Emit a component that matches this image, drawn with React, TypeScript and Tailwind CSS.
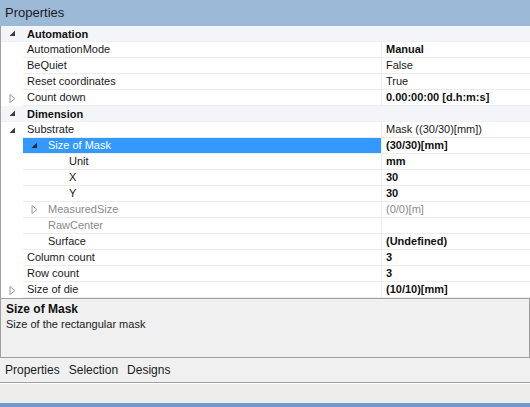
import React from 'react'

type Row = {
  name: string
  value?: string
  level: number
  category?: boolean
  expander?: 'open' | 'closed'
  boldValue?: boolean
  muted?: boolean
  selected?: boolean
}

const rows: Row[] = [
  { name: 'Automation', level: 0, category: true, expander: 'open' },
  { name: 'AutomationMode', value: 'Manual', level: 0, boldValue: true },
  { name: 'BeQuiet', value: 'False', level: 0 },
  { name: 'Reset coordinates', value: 'True', level: 0 },
  { name: 'Count down', value: '0.00:00:00 [d.h:m:s]', level: 0, expander: 'closed', boldValue: true },
  { name: 'Dimension', level: 0, category: true, expander: 'open' },
  { name: 'Substrate', value: 'Mask ((30/30)[mm])', level: 0, expander: 'open' },
  { name: 'Size of Mask', value: '(30/30)[mm]', level: 1, expander: 'open', boldValue: true, selected: true },
  { name: 'Unit', value: 'mm', level: 2, boldValue: true },
  { name: 'X', value: '30', level: 2, boldValue: true },
  { name: 'Y', value: '30', level: 2, boldValue: true },
  { name: 'MeasuredSize', value: '(0/0)[m]', level: 1, expander: 'closed', muted: true },
  { name: 'RawCenter', value: '', level: 1, muted: true },
  { name: 'Surface', value: '(Undefined)', level: 1, boldValue: true },
  { name: 'Column count', value: '3', level: 0, boldValue: true },
  { name: 'Row count', value: '3', level: 0, boldValue: true },
  { name: 'Size of die', value: '(10/10)[mm]', level: 0, expander: 'closed', boldValue: true },
]

function Expander({ kind, light }: { kind: 'open' | 'closed'; light?: boolean }) {
  if (kind === 'open') {
    return (
      <svg width="7" height="7" viewBox="0 0 7 7">
        <polygon points="6,0.5 6,6 0.5,6" fill={light ? '#1a2a40' : '#3c3c3c'} />
      </svg>
    )
  }
  return (
    <svg width="7" height="9" viewBox="0 0 7 9">
      <polygon points="1,0.5 6,4.5 1,8.5" fill="none" stroke="#9a9a9a" strokeWidth="1" />
    </svg>
  )
}

function GridRow({ row }: { row: Row }) {
  const indent = row.level === 0 ? 'pl-[4px]' : row.level === 1 ? 'pl-[8px]' : 'pl-[46px]'
  const nameColor = row.selected ? 'text-white' : row.muted ? 'text-[#8a8a8a]' : 'text-[#1a1a1a]'

  if (row.category) {
    return (
      <div className="flex h-[16px] bg-[#f3f5f8] border-b border-[#f0f0f0]">
        <div className="w-[22px] flex items-center justify-center">
          {row.expander && <Expander kind={row.expander} />}
        </div>
        <div className="pl-[4px] font-bold text-[#111] leading-[16px]">{row.name}</div>
      </div>
    )
  }

  return (
    <div className="flex h-[16px]">
      <div className="w-[22px] flex items-center justify-center">
        {row.level === 0 && row.expander && <Expander kind={row.expander} />}
      </div>
      <div
        className={`w-[359px] flex items-center border-b border-r border-[#ececec] ${row.selected ? 'bg-[#3399ff]' : 'bg-white'} ${indent}`}
      >
        {row.level === 1 && (
          <span className="w-[17px] flex items-center shrink-0">
            {row.expander && <Expander kind={row.expander} light={row.selected} />}
          </span>
        )}
        <span className={`${nameColor} leading-[15px]`}>{row.name}</span>
      </div>
      <div
        className={`flex-1 border-b border-[#ececec] pl-[4px] leading-[15px] ${row.boldValue ? 'font-bold text-[#111]' : row.muted ? 'text-[#8a8a8a]' : 'text-[#1a1a1a]'}`}
      >
        {row.value}
      </div>
    </div>
  )
}

export default function App() {
  return (
    <div
      className="w-[530px] h-[407px] flex flex-col bg-[#f0f0f0] text-[11px] overflow-hidden"
      style={{ fontFamily: '"Liberation Sans", Arial, sans-serif' }}
    >
      <div className="h-[26px] bg-[#9db9d8] flex items-center pl-[5px] text-[13px] text-[#1b1b1b]">
        Properties
      </div>
      <div className="h-[272px] bg-white border-l border-[#a0a0a0]">
        {rows.map((row) => (
          <GridRow key={row.name} row={row} />
        ))}
      </div>
      <div className="h-[60px] border border-[#a0a0a0] bg-[#f0f0f0] px-[5px] pt-[3px]">
        <div className="font-bold text-[12px] text-[#111] leading-[15px]">Size of Mask</div>
        <div className="text-[#1a1a1a] leading-[15px]">Size of the rectangular mask</div>
      </div>
      <div className="h-[25px] flex items-center gap-[9px] pl-[5px] text-[12px] text-[#1a1a1a] border-b border-[#a0a0a0]">
        <span>Properties</span>
        <span>Selection</span>
        <span>Designs</span>
      </div>
      <div className="flex-1 bg-[#efedeb] border-t border-white" />
      <div className="h-[4px] bg-[#6b9bd1]" />
    </div>
  )
}
